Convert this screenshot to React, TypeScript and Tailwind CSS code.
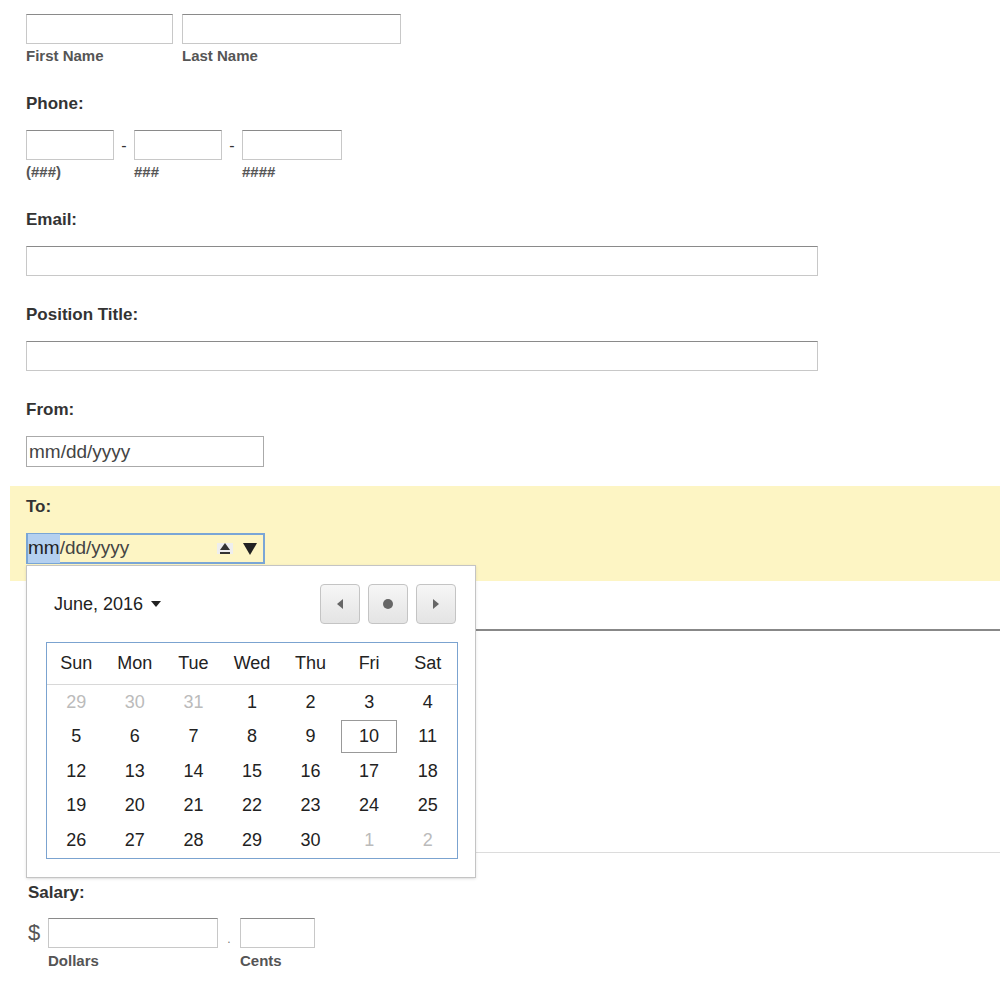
import React from "react";

const font = { fontFamily: '"Liberation Sans", Arial, sans-serif' };

function Label({ children, className = "" }: { children: React.ReactNode; className?: string }) {
  return <div className={`text-[17px] font-bold text-[#333] leading-5 ${className}`}>{children}</div>;
}

function Box({ className = "" }: { className?: string }) {
  return <div className={`h-[30px] border border-[#c8c8c8] border-t-[#8a8a8a] bg-white ${className}`} />;
}

function Sub({ children, className = "" }: { children: React.ReactNode; className?: string }) {
  return <div className={`text-[15px] font-bold text-[#555] leading-4 ${className}`}>{children}</div>;
}

const weeks = [
  [29, 30, 31, 1, 2, 3, 4],
  [5, 6, 7, 8, 9, 10, 11],
  [12, 13, 14, 15, 16, 17, 18],
  [19, 20, 21, 22, 23, 24, 25],
  [26, 27, 28, 29, 30, 1, 2],
];

function Calendar() {
  return (
    <div className="absolute left-[26px] top-[79px] z-10 w-[450px] h-[313px] bg-white border border-[#c4c4c4] shadow-sm px-[19px] pt-[18px]">
      <div className="flex items-center justify-between h-[40px]">
        <div className="flex items-center gap-2 pl-[8px] text-[18px] text-[#222]">
          June, 2016
          <svg width="10" height="6" viewBox="0 0 10 6"><path d="M0 0h10L5 6z" fill="#222" /></svg>
        </div>
        <div className="flex gap-2">
          {["l", "c", "r"].map((k) => (
            <div key={k} className="w-[40px] h-[40px] rounded-sm border border-[#c4c4c4] bg-gradient-to-b from-[#f6f6f6] to-[#e4e4e4] flex items-center justify-center">
              {k === "l" && <svg width="6" height="10" viewBox="0 0 6 10"><path d="M6 0v10L0 5z" fill="#666" /></svg>}
              {k === "c" && <div className="w-[10px] h-[10px] rounded-full bg-[#666]" />}
              {k === "r" && <svg width="6" height="10" viewBox="0 0 6 10"><path d="M0 0v10l6-5z" fill="#666" /></svg>}
            </div>
          ))}
        </div>
      </div>
      <div className="mt-[18px] border border-[#7ba3d0] w-[412px]">
        <div className="grid grid-cols-7 h-[42px] items-center border-b border-[#d8d8d8] text-[18px] text-[#222] text-center">
          {["Sun", "Mon", "Tue", "Wed", "Thu", "Fri", "Sat"].map((d) => <div key={d}>{d}</div>)}
        </div>
        <div>
          {weeks.map((w, i) => (
            <div key={i} className="grid grid-cols-7 h-[34.5px] items-center text-center text-[18px]">
              {w.map((d, j) => {
                const muted = (i === 0 && d > 20) || (i === 4 && d < 10);
                const today = i === 1 && d === 10;
                return (
                  <div key={j} className={`${muted ? "text-[#bbb]" : "text-[#222]"} ${today ? "mx-auto w-[56px] h-[33px] leading-[31px] border border-[#999]" : ""}`}>{d}</div>
                );
              })}
            </div>
          ))}
        </div>
      </div>
    </div>
  );
}

export default function App() {
  return (
    <div style={font} className="w-[1000px] h-[1000px] bg-white relative overflow-hidden pt-[14px]">
      <div className="pl-[26px]">
        <div className="flex gap-[9px]">
          <div><Box className="w-[147px]" /><Sub className="mt-[4px]">First Name</Sub></div>
          <div><Box className="w-[219px]" /><Sub className="mt-[4px]">Last Name</Sub></div>
        </div>
        <Label className="mt-[30px]">Phone:</Label>
        <div className="flex items-start mt-[16px]">
          <div><Box className="w-[88px]" /><Sub className="mt-[4px]">(###)</Sub></div>
          <span className="w-[20px] text-center text-[16px] text-[#333] mt-[4px]">-</span>
          <div><Box className="w-[88px]" /><Sub className="mt-[4px]">###</Sub></div>
          <span className="w-[20px] text-center text-[16px] text-[#333] mt-[4px]">-</span>
          <div><Box className="w-[100px]" /><Sub className="mt-[4px]">####</Sub></div>
        </div>
        <Label className="mt-[30px]">Email:</Label>
        <Box className="w-[792px] mt-[16px]" />
        <Label className="mt-[29px]">Position Title:</Label>
        <Box className="w-[792px] mt-[16px]" />
        <Label className="mt-[29px]">From:</Label>
        <div className="mt-[16px] w-[238px] h-[31px] border border-[#aaa] px-[2px] text-[19px] leading-[29px] text-[#444]">mm/dd/yyyy</div>
      </div>
      <div className="relative mt-[19px]">
        <div className="ml-[10px] bg-[#fdf5c4] h-[95px] pl-[16px] pt-[11px]">
          <Label>To:</Label>
          <div className="mt-[16px] w-[239px] h-[31px] border-2 border-[#7aa6d6] flex items-center text-[19px] text-[#444]">
            <span className="bg-[#b4d0f0] text-[#222]">mm</span>/dd/yyyy
            <span className="ml-auto flex items-center gap-[10px] pr-[6px]">
              <span className="bg-[#eee] px-[3px] flex flex-col items-center">
                <svg width="10" height="7" viewBox="0 0 10 7"><path d="M0 7h10L5 0z" fill="#333" /></svg>
                <span className="block w-[10px] h-[2px] bg-[#333] mt-[2px]" />
              </span>
              <svg width="14" height="12" viewBox="0 0 14 12"><path d="M0 0h14L7 12z" fill="#222" /></svg>
            </span>
          </div>
        </div>
        <div className="ml-[26px] mt-[48px] h-[224px] border border-[#dcdcdc] border-t-2 border-t-[#888] border-r-0" />
        <Calendar />
      </div>
      <div className="pl-[28px] mt-[30px]">
        <Label>Salary:</Label>
        <div className="flex items-start mt-[15px]">
          <span className="text-[22px] text-[#555] w-[20px] leading-[30px]">$</span>
          <div><Box className="w-[170px]" /><Sub className="mt-[5px]">Dollars</Sub></div>
          <span className="w-[22px] text-center text-[12px] text-[#777] mt-[12px]">.</span>
          <div><Box className="w-[75px]" /><Sub className="mt-[5px]">Cents</Sub></div>
        </div>
      </div>
    </div>
  );
}
